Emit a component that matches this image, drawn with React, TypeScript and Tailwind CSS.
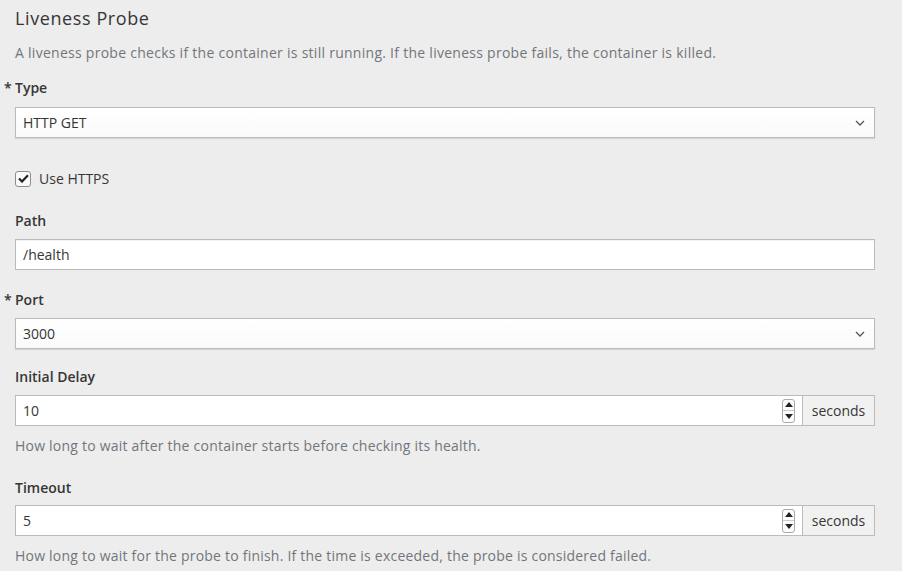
import React from 'react';

const font = { fontFamily: '"Open Sans", "Noto Sans", sans-serif' };

const Label: React.FC<{ text: string; required?: boolean; className?: string }> = ({ text, required, className = 'mb-[9px]' }) => (
  <div className={`relative text-[14px] font-semibold text-[#363636] leading-[18px] ${className}`}>
    {required && <span className="absolute -left-[11px] top-0">*</span>}
    {text}
  </div>
);

const Select: React.FC<{ value: string }> = ({ value }) => (
  <div className="flex items-center justify-between h-[31px] border border-[#bbbbbb] bg-gradient-to-b from-white to-[#fafafa] shadow-[0_1px_1px_rgba(3,3,3,0.1)] px-[7px] text-[14px] text-[#363636]">
    <span>{value}</span>
    <svg width="10" height="6" viewBox="0 0 10 6" className="mr-[2px]">
      <path d="M1 1 L5 5 L9 1" fill="none" stroke="#555" strokeWidth="1.3" />
    </svg>
  </div>
);

const TextInput: React.FC<{ value: string }> = ({ value }) => (
  <div className="flex items-center h-[31px] border border-[#bbbbbb] bg-white px-[7px] text-[14px] text-[#363636] shadow-[inset_0_1px_1px_rgba(3,3,3,0.05)]">
    {value}
  </div>
);

const Spinner: React.FC = () => (
  <div className="flex flex-col w-[13px] h-[24px] border border-[#aaa] rounded-[3px] bg-[#fdfdfd] overflow-hidden">
    <div className="flex-1 flex items-center justify-center border-b border-[#ccc]">
      <svg width="8" height="5" viewBox="0 0 8 5"><path d="M0 5 L4 0 L8 5 Z" fill="#222" /></svg>
    </div>
    <div className="flex-1 flex items-center justify-center">
      <svg width="8" height="5" viewBox="0 0 8 5"><path d="M0 0 L4 5 L8 0 Z" fill="#222" /></svg>
    </div>
  </div>
);

const NumberInput: React.FC<{ value: string }> = ({ value }) => (
  <div className="flex h-[31px]">
    <div className="flex-1 flex items-center justify-between border border-[#bbbbbb] bg-white pl-[7px] pr-[7px] text-[14px] text-[#363636]">
      <span>{value}</span>
      <Spinner />
    </div>
    <div className="w-[72px] flex items-center justify-center border border-l-0 border-[#bbbbbb] bg-[#f1f1f1] text-[14px] text-[#363636]">
      seconds
    </div>
  </div>
);

const Help: React.FC<{ text: string }> = ({ text }) => (
  <div className="mt-[10px] text-[14px] tracking-[0.22px] text-[#72767b] leading-[20px]">{text}</div>
);

const App: React.FC = () => {
  return (
    <div className="min-h-[571px] bg-[#ededed] pl-[15px] pr-[27px] pt-[5px]" style={font}>
      <h3 className="text-[18px] tracking-[0.6px] text-[#363636] leading-[26px]">Liveness Probe</h3>
      <p className="mt-[12px] text-[14px] tracking-[0.27px] text-[#72767b] leading-[20px]">
        A liveness probe checks if the container is still running. If the liveness probe fails, the container is killed.
      </p>

      <div className="mt-[16px]">
        <Label text="Type" required className="mb-[10px]" />
        <Select value="HTTP GET" />
      </div>

      <label className="mt-[30px] flex items-center gap-[8px] text-[14px] text-[#363636]">
        <span className="w-[16px] h-[16px] border border-[#8b8d8f] rounded-[3px] bg-[#fafafa] flex items-center justify-center">
          <svg width="11" height="9" viewBox="0 0 11 9">
            <path d="M1 4.5 L4 7.5 L10 1.2" fill="none" stroke="#222" strokeWidth="2.2" />
          </svg>
        </span>
        Use HTTPS
      </label>

      <div className="mt-[23px]">
        <Label text="Path" />
        <TextInput value="/health" />
      </div>

      <div className="mt-[21px]">
        <Label text="Port" required />
        <Select value="3000" />
      </div>

      <div className="mt-[19px]">
        <Label text="Initial Delay" />
        <NumberInput value="10" />
        <Help text="How long to wait after the container starts before checking its health." />
      </div>

      <div className="mt-[23px]">
        <Label text="Timeout" className="mb-[8px]" />
        <NumberInput value="5" />
        <Help text="How long to wait for the probe to finish. If the time is exceeded, the probe is considered failed." />
      </div>
    </div>
  );
};

export default App;
